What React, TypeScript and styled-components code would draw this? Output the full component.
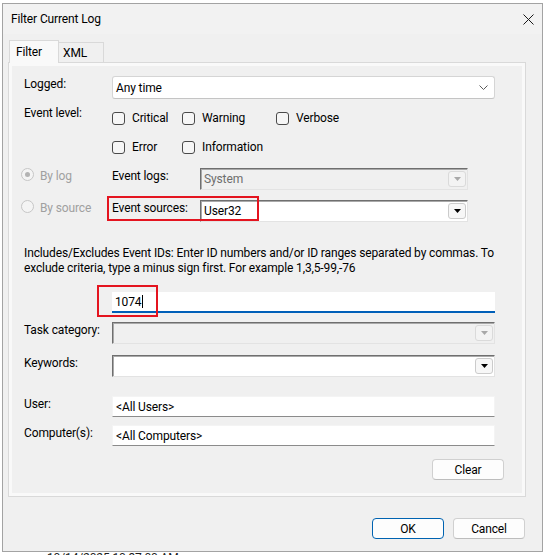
import React from "react";
import styled, { createGlobalStyle, css } from "styled-components";

const FONT = `"Segoe UI", Roboto, "Liberation Sans", sans-serif`;

const Global = createGlobalStyle`
  html, body { margin: 0; padding: 0; background: #ffffff; }
  body { font-family: ${FONT}; font-size: 12px; letter-spacing: -0.13px; color: #000; }
  * { box-sizing: border-box; }
`;

const Screen = styled.div`
  position: relative;
  width: 545px;
  height: 555px;
  overflow: hidden;
  background: #ffffff;
`;

/* ---------- background event list (only slivers are visible) ---------- */
const Backdrop = styled.div`
  display: flex;
  flex-direction: column;
  justify-content: space-between;
  height: 100%;
  font-size: 12px;
  line-height: 14px;
  color: #1b1b1b;
`;

const BackRow = styled.div<{ $edge: "top" | "bottom" }>`
  display: flex;
  height: 14px;
  white-space: nowrap;
  ${(p) => (p.$edge === "top" ? css`margin-top: -11px;` : css`margin-bottom: -10px;`)}
`;

const BackCell = styled.span<{ $w: number; $ml?: number; $end?: boolean }>`
  display: flex;
  flex: none;
  width: ${(p) => p.$w}px;
  margin-left: ${(p) => p.$ml ?? 0}px;
  overflow: hidden;
  justify-content: ${(p) => (p.$end ? "flex-end" : "flex-start")};
`;

/* ---------- dialog ---------- */
const Dialog = styled.div`
  position: absolute;
  left: 2px;
  top: 3px;
  width: 541px;
  height: 549px;
  background: #f0f0f0;
  border: 1px solid #a3a3a3;
  display: flex;
  flex-direction: column;
`;

const TitleBar = styled.div`
  height: 30px;
  flex: none;
  display: flex;
  align-items: center;
  justify-content: space-between;
  padding-left: 8px;
  background: #f2f2f2;
`;

const TitleText = styled.span`
  font-size: 12px;
  color: #000;
`;

const CloseButton = styled.div`
  width: 28px;
  height: 30px;
  display: flex;
  align-items: center;
  justify-content: center;
`;

const TabStrip = styled.div`
  display: flex;
  align-items: flex-end;
  height: 28px;
  padding-left: 6px;
  flex: none;
`;

const Tab = styled.div<{ $active?: boolean }>`
  position: relative;
  display: flex;
  align-items: center;
  font-size: 12px;
  border: 1px solid #d9d9d9;
  ${(p) =>
    p.$active
      ? css`
          width: 50px;
          height: 23px;
          margin-bottom: -1px;
          padding-left: 6px;
          background: #f9f9f9;
          border-bottom: none;
          z-index: 1;
        `
      : css`
          width: 45px;
          height: 20px;
          padding-left: 4px;
          background: #f0f0f0;
          border-left: none;
          border-bottom: none;
        `}
`;

const Panel = styled.div`
  position: relative;
  margin-left: 5px;
  width: 518px;
  height: 435px;
  flex: none;
  border: 1px solid #d9d9d9;
  box-shadow: inset 0 0 0 3px #f9f9f9;
  background: #f0f0f0;
  padding: 13px 21px 0 15px;
  display: flex;
  flex-direction: column;
`;

const Row = styled.div<{ $mt?: number; $h?: number }>`
  position: relative;
  display: flex;
  align-items: flex-start;
  margin-top: ${(p) => p.$mt ?? 0}px;
  ${(p) => (p.$h ? css`height: ${p.$h}px;` : "")}
  flex: none;
`;

const FieldLabel = styled.span<{ $w?: number; $muted?: boolean }>`
  width: ${(p) => p.$w ?? 88}px;
  flex: none;
  line-height: 16px;
  white-space: nowrap;
  color: ${(p) => (p.$muted ? "#a0a0a0" : "#000")};
`;

/* modern combo (Logged) */
const ModernCombo = styled.div`
  width: 383px;
  height: 23px;
  background: #ffffff;
  border: 1px solid #d5d5d5;
  border-bottom-color: #c4c4c4;
  border-radius: 3px;
  display: flex;
  align-items: center;
  justify-content: space-between;
  padding: 0 6px 0 3px;
`;

/* classic combo */
const ClassicCombo = styled.div<{ $w: number; $disabled?: boolean; $h?: number }>`
  width: ${(p) => p.$w}px;
  height: ${(p) => p.$h ?? 22}px;
  flex: none;
  display: flex;
  align-items: center;
  justify-content: space-between;
  padding: 0 1px 0 1px;
  background: ${(p) => (p.$disabled ? "#f0f0f0" : "#ffffff")};
  color: ${(p) => (p.$disabled ? "#6d6d6d" : "#000")};
  border-top: 1px solid #6f6f6f;
  border-left: 1px solid #6f6f6f;
  border-right: 1px solid #e3e3e3;
  border-bottom: 1px solid #e3e3e3;
  box-shadow: inset 1px 1px 0 #a9a9a9;
`;

const ComboText = styled.span`
  padding-left: 2px;
  white-space: nowrap;
`;

const DropButton = styled.div<{ $disabled?: boolean }>`
  width: 18px;
  height: 16px;
  flex: none;
  border: 1px solid ${(p) => (p.$disabled ? "#dadada" : "#cbcbcb")};
  border-radius: 3px;
  background: ${(p) => (p.$disabled ? "#f3f3f3" : "#f7f7f7")};
  display: flex;
  align-items: center;
  justify-content: center;
`;

/* check boxes */
const CheckGrid = styled.div`
  display: grid;
  grid-template-columns: 70px 94px auto;
  row-gap: 16px;
  padding-top: 7px;
`;

const CheckItem = styled.label`
  display: flex;
  align-items: center;
  gap: 7px;
  height: 13px;
  line-height: 13px;
  white-space: nowrap;
`;

const CheckBox = styled.span`
  width: 13px;
  height: 13px;
  flex: none;
  border: 1px solid #4a4a4a;
  border-radius: 3px;
  background: #f6f6f6;
`;

/* radios */
const RadioGroup = styled.div`
  width: 91px;
  margin-left: -3px;
  flex: none;
  display: flex;
  align-items: flex-start;
  gap: 6px;
`;

const Radio = styled.span<{ $checked?: boolean }>`
  width: 13px;
  height: 13px;
  flex: none;
  border-radius: 50%;
  border: 1px solid #c6c6c6;
  background: #f4f4f4;
  display: flex;
  align-items: center;
  justify-content: center;
  &::after {
    content: "";
    width: 5px;
    height: 5px;
    border-radius: 50%;
    background: ${(p) => (p.$checked ? "#b3b3b3" : "transparent")};
  }
`;

const Description = styled.p`
  margin: 0;
  line-height: 15px;
  white-space: nowrap;
`;

const IdInput = styled.div`
  width: 383px;
  height: 21px;
  margin-left: 88px;
  background: #ffffff;
  border-bottom: 2px solid #005fb8;
  display: flex;
  align-items: center;
  padding-left: 3px;
`;

const Caret = styled.span`
  display: inline-block;
  width: 1px;
  height: 13px;
  background: #000;
  margin-left: 1px;
`;

const TextBox = styled.div`
  width: 383px;
  height: 21px;
  background: #ffffff;
  border: 1px solid #f4f4f4;
  border-bottom: 1px solid #8b8b8b;
  display: flex;
  align-items: center;
  padding-left: 3px;
  white-space: nowrap;
`;

const Highlight = styled.div<{ $l: number; $t: number; $w: number; $h: number }>`
  position: absolute;
  left: ${(p) => p.$l}px;
  top: ${(p) => p.$t}px;
  width: ${(p) => p.$w}px;
  height: ${(p) => p.$h}px;
  border: 2px solid #e4141f;
  pointer-events: none;
`;

const ButtonRow = styled.div<{ $mt: number; $gap?: number; $pr?: number }>`
  display: flex;
  justify-content: flex-end;
  gap: ${(p) => p.$gap ?? 0}px;
  margin-top: ${(p) => p.$mt}px;
  padding-right: ${(p) => p.$pr ?? 0}px;
  flex: none;
`;

const Button = styled.div<{ $primary?: boolean }>`
  width: 72px;
  height: 21px;
  display: flex;
  align-items: center;
  justify-content: center;
  background: #fdfdfd;
  border: 1px solid ${(p) => (p.$primary ? "#0063b1" : "#d0d0d0")};
  border-bottom-color: ${(p) => (p.$primary ? "#0063b1" : "#bdbdbd")};
  border-radius: 4px;
  font-size: 12px;
`;

/* ---------- icons ---------- */
const CloseIcon = () => (
  <svg width="11" height="11" viewBox="0 0 11 11">
    <path d="M0.5 0.5 L10.5 10.5 M10.5 0.5 L0.5 10.5" stroke="#1a1a1a" strokeWidth="1" fill="none" />
  </svg>
);

const Chevron = () => (
  <svg width="9" height="5" viewBox="0 0 9 5">
    <path d="M0.5 0.5 L4.5 4.5 L8.5 0.5" stroke="#5a5a5a" strokeWidth="1" fill="none" />
  </svg>
);

const Arrow = ({ color }: { color: string }) => (
  <svg width="7" height="4" viewBox="0 0 7 4">
    <path d="M0 0 H7 L3.5 4 Z" fill={color} />
  </svg>
);

const Drop = ({ disabled }: { disabled?: boolean }) => (
  <DropButton $disabled={disabled}>
    <Arrow color={disabled ? "#a8a8a8" : "#000"} />
  </DropButton>
);

export default function App() {
  return (
    <>
      <Global />
      <Screen>
        <Backdrop>
          <BackRow $edge="top">
            <BackCell $w={36} $end>
              10/14/2025 10:37:00 AM
            </BackCell>
            <BackCell $w={93} $ml={133}>
              Service Control Manager
            </BackCell>
            <BackCell $w={30} $ml={204}>
              7036
            </BackCell>
            <BackCell $w={14} $ml={4}>
              None
            </BackCell>
          </BackRow>
          <BackRow $edge="bottom">
            <BackCell $w={140} $ml={47}>
              10/14/2025 10:37:00 AM
            </BackCell>
          </BackRow>
        </Backdrop>

        <Dialog>
          <TitleBar>
            <TitleText>Filter Current Log</TitleText>
            <CloseButton>
              <CloseIcon />
            </CloseButton>
          </TitleBar>

          <TabStrip>
            <Tab $active>Filter</Tab>
            <Tab>XML</Tab>
          </TabStrip>

          <Panel>
            <Row $h={23}>
              <FieldLabel>Logged:</FieldLabel>
              <ModernCombo>
                <span>Any time</span>
                <Chevron />
              </ModernCombo>
            </Row>

            <Row $mt={6}>
              <FieldLabel>Event level:</FieldLabel>
              <CheckGrid>
                <CheckItem>
                  <CheckBox />
                  Critical
                </CheckItem>
                <CheckItem>
                  <CheckBox />
                  Warning
                </CheckItem>
                <CheckItem>
                  <CheckBox />
                  Verbose
                </CheckItem>
                <CheckItem>
                  <CheckBox />
                  Error
                </CheckItem>
                <CheckItem>
                  <CheckBox />
                  Information
                </CheckItem>
              </CheckGrid>
            </Row>

            <Row $mt={14} $h={22}>
              <RadioGroup>
                <Radio $checked />
                <FieldLabel $w={60} $muted>
                  By log
                </FieldLabel>
              </RadioGroup>
              <FieldLabel>Event logs:</FieldLabel>
              <ClassicCombo $w={268} $disabled>
                <ComboText>System</ComboText>
                <Drop disabled />
              </ClassicCombo>
            </Row>

            <Row $mt={10} $h={22}>
              <RadioGroup>
                <Radio />
                <FieldLabel $w={60} $muted>
                  By source
                </FieldLabel>
              </RadioGroup>
              <FieldLabel>Event sources:</FieldLabel>
              <ClassicCombo $w={268}>
                <ComboText>User32</ComboText>
                <Drop />
              </ClassicCombo>
              <Highlight $l={83} $t={-4} $w={152} $h={25} />
            </Row>

            <Row $mt={24}>
              <Description>
                Includes/Excludes Event IDs: Enter ID numbers and/or ID ranges separated by commas. To
                <br />
                exclude criteria, type a minus sign first. For example 1,3,5-99,-76
              </Description>
            </Row>

            <Row $mt={16} $h={21}>
              <IdInput>
                1074
                <Caret />
              </IdInput>
              <Highlight $l={73} $t={-7} $w={61} $h={32} />
            </Row>

            <Row $mt={9} $h={22}>
              <FieldLabel>Task category:</FieldLabel>
              <ClassicCombo $w={383} $disabled>
                <ComboText />
                <Drop disabled />
              </ClassicCombo>
            </Row>

            <Row $mt={11} $h={22}>
              <FieldLabel>Keywords:</FieldLabel>
              <ClassicCombo $w={383}>
                <ComboText />
                <Drop />
              </ClassicCombo>
            </Row>

            <Row $mt={19} $h={21}>
              <FieldLabel>User:</FieldLabel>
              <TextBox>&lt;All Users&gt;</TextBox>
            </Row>

            <Row $mt={8} $h={21}>
              <FieldLabel>Computer(s):</FieldLabel>
              <TextBox>&lt;All Computers&gt;</TextBox>
            </Row>

            <ButtonRow $mt={13}>
              <Button>Clear</Button>
            </ButtonRow>
          </Panel>

          <ButtonRow $mt={21} $gap={9} $pr={17}>
            <Button $primary>OK</Button>
            <Button>Cancel</Button>
          </ButtonRow>
        </Dialog>
      </Screen>
    </>
  );
}
